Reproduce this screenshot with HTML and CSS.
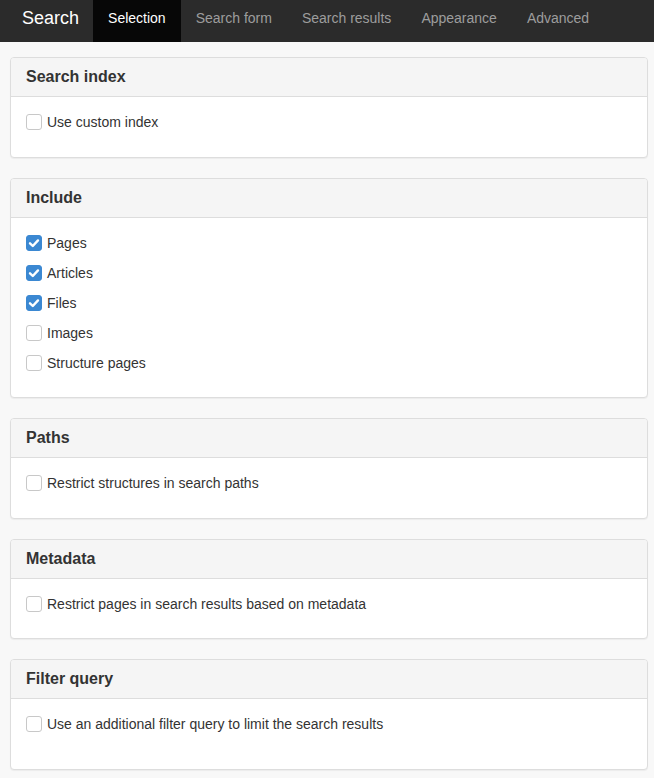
FILE: index.html
```html
<!DOCTYPE html>
<html lang="en">
<head>
<meta charset="utf-8">
<title>Search</title>
<link rel="stylesheet" href="styles.css">
</head>
<body>
<nav class="navbar">
  <span class="brand">Search</span>
  <ul class="tabs">
    <li class="tab active">Selection</li>
    <li class="tab">Search form</li>
    <li class="tab">Search results</li>
    <li class="tab">Appearance</li>
    <li class="tab">Advanced</li>
  </ul>
</nav>
<main class="content">
  <section class="panel">
    <h2 class="panel-heading">Search index</h2>
    <div class="panel-body">
      <label class="check"><span class="box"></span>Use custom index</label>
    </div>
  </section>
  <section class="panel">
    <h2 class="panel-heading">Include</h2>
    <div class="panel-body panel-body-short">
      <label class="check"><span class="box checked"><svg viewBox="0 0 16 16" width="16" height="16"><path d="M4 8.3 L6.8 11 L12 5.4" fill="none" stroke="#fff" stroke-width="2.4" stroke-linecap="round" stroke-linejoin="round"/></svg></span>Pages</label>
      <label class="check"><span class="box checked"><svg viewBox="0 0 16 16" width="16" height="16"><path d="M4 8.3 L6.8 11 L12 5.4" fill="none" stroke="#fff" stroke-width="2.4" stroke-linecap="round" stroke-linejoin="round"/></svg></span>Articles</label>
      <label class="check"><span class="box checked"><svg viewBox="0 0 16 16" width="16" height="16"><path d="M4 8.3 L6.8 11 L12 5.4" fill="none" stroke="#fff" stroke-width="2.4" stroke-linecap="round" stroke-linejoin="round"/></svg></span>Files</label>
      <label class="check"><span class="box"></span>Images</label>
      <label class="check"><span class="box"></span>Structure pages</label>
    </div>
  </section>
  <section class="panel">
    <h2 class="panel-heading">Paths</h2>
    <div class="panel-body">
      <label class="check"><span class="box"></span>Restrict structures in search paths</label>
    </div>
  </section>
  <section class="panel">
    <h2 class="panel-heading">Metadata</h2>
    <div class="panel-body panel-body-short">
      <label class="check"><span class="box"></span>Restrict pages in search results based on metadata</label>
    </div>
  </section>
  <section class="panel">
    <h2 class="panel-heading">Filter query</h2>
    <div class="panel-body panel-body-tall">
      <label class="check"><span class="box"></span>Use an additional filter query to limit the search results</label>
    </div>
  </section>
</main>
</body>
</html>
```
FILE: styles.css
```css
* { box-sizing: border-box; }
html, body {
  margin: 0;
  padding: 0;
  background: #f8f8f8;
  font-family: "Liberation Sans", Arial, Helvetica, sans-serif;
  font-size: 14px;
  line-height: 20px;
  color: #333;
}
.navbar {
  display: flex;
  height: 42px;
  background: #2b2b2b;
  padding-left: 7px;
}
.brand {
  padding: 8px 14px 0 15px;
  font-size: 18px;
  line-height: 20px;
  color: #fff;
}
.tabs {
  display: flex;
  margin: 0;
  padding: 0;
  list-style: none;
}
.tab {
  padding: 8px 15px 0 15px;
  height: 42px;
  color: #9d9d9d;
}
.tab.active {
  background: #070707;
  color: #fff;
}
.content {
  padding: 15px 6px 9px 10px;
  display: flex;
  flex-direction: column;
  gap: 20px;
}
.panel {
  background: #fff;
  border: 1px solid #ddd;
  border-radius: 4px;
  box-shadow: 0 1px 1px rgba(0, 0, 0, 0.05);
}
.panel-heading {
  margin: 0;
  padding: 10px 15px;
  font-size: 16px;
  line-height: 18px;
  font-weight: bold;
  color: #333;
  background: #f5f5f5;
  border-bottom: 1px solid #ddd;
  border-radius: 3px 3px 0 0;
}
.panel-body {
  padding: 15px 15px 25px 15px;
  display: flex;
  flex-direction: column;
  gap: 10px;
}
.panel-body-short {
  padding-bottom: 24px;
}
.panel-body-tall {
  padding-bottom: 35px;
}
.check {
  display: flex;
  align-items: center;
  gap: 5px;
  height: 20px;
}
.box {
  width: 16px;
  height: 16px;
  border: 1px solid #c8c8c8;
  border-radius: 3px;
  background: #fff;
  display: flex;
  flex-shrink: 0;
}
.box.checked {
  background: #3b88d2;
  border-color: #3b88d2;
}
.box svg {
  margin: -1px;
}
```
